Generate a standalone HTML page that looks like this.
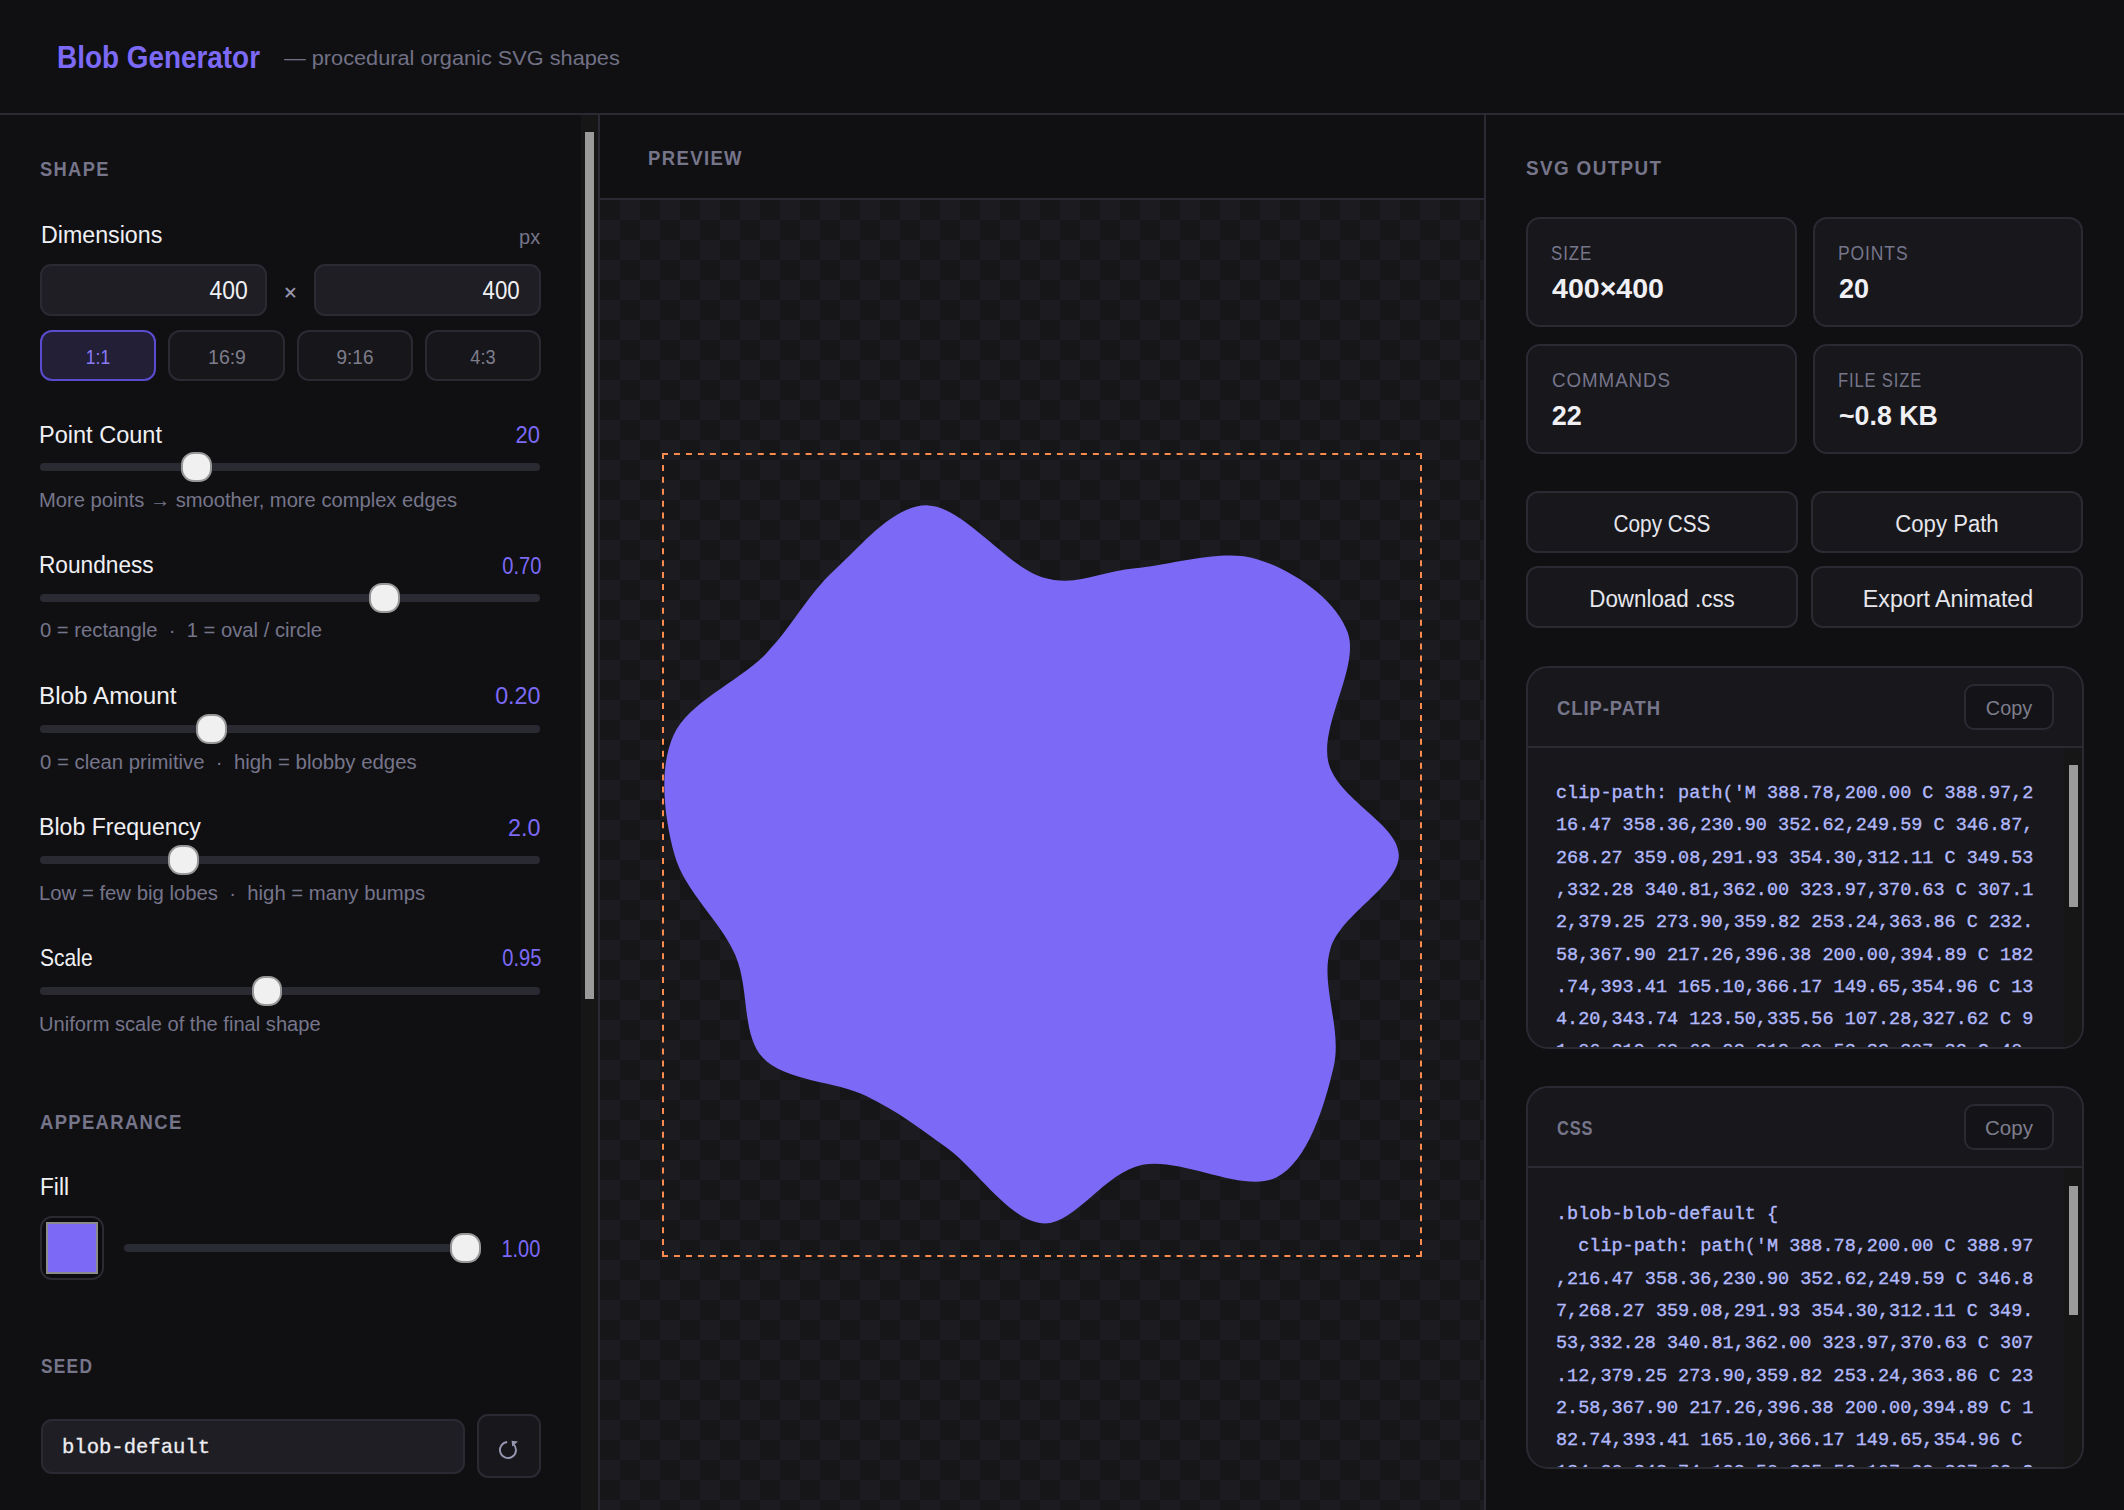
<!DOCTYPE html>
<html><head><meta charset="utf-8"><style>
html,body{margin:0;padding:0;background:#101013;width:2124px;height:1510px;overflow:hidden}
body div,body svg{position:absolute}
.t{white-space:nowrap;line-height:0}
</style></head><body>
<div style="left:0px;top:113px;width:2124px;height:2px;background:#2a2a34"></div>
<div id="title" class="t" style="left:57.40px;transform-origin:0 0;transform:scaleX(0.8997);top:58.06px;font-family:'Liberation Sans', sans-serif;font-size:31px;color:#7c6af7;font-weight:700;letter-spacing:0px;">Blob Generator</div>
<div id="sub" class="t" style="left:284.00px;transform-origin:0 0;transform:scaleX(1.0600);top:58.30px;font-family:'Liberation Sans', sans-serif;font-size:20.5px;color:#727185;font-weight:400;letter-spacing:0px;">— procedural organic SVG shapes</div>
<div style="left:598px;top:115px;width:2px;height:1395px;background:#2a2a34"></div>
<div style="left:581px;top:115px;width:17px;height:1395px;background:#161617"></div>
<div style="left:585px;top:132px;width:9px;height:867px;background:#9a9a9a"></div>
<div id="shape" class="t" style="left:39.80px;transform-origin:0 0;transform:scaleX(0.8884);top:169.06px;font-family:'Liberation Sans', sans-serif;font-size:20.6px;color:#76758a;font-weight:700;letter-spacing:1.5px;">SHAPE</div>
<div id="dim" class="t" style="left:40.70px;transform-origin:0 0;transform:scaleX(0.9600);top:234.61px;font-family:'Liberation Sans', sans-serif;font-size:24.2px;color:#f0f0f4;font-weight:400;letter-spacing:0px;">Dimensions</div>
<div id="px" class="t" style="right:1583.50px;text-align:right;transform-origin:100% 0;transform:scaleX(0.9535);top:236.72px;font-family:'Liberation Sans', sans-serif;font-size:21px;color:#76758a;font-weight:400;letter-spacing:0px;">px</div>
<div style="left:40px;top:264px;width:227px;height:52px;background:#1e1e24;border:2px solid #2a2a33;box-sizing:border-box;border-radius:11px"></div>
<div id="in40" class="t" style="right:1876.50px;text-align:right;transform-origin:100% 0;transform:scaleX(0.9174);top:289.94px;font-family:'Liberation Sans', sans-serif;font-size:25px;color:#f0f0f4;font-weight:400;letter-spacing:0px;">400</div>
<div style="left:314px;top:264px;width:227px;height:52px;background:#1e1e24;border:2px solid #2a2a33;box-sizing:border-box;border-radius:11px"></div>
<div id="in314" class="t" style="right:1604.00px;text-align:right;transform-origin:100% 0;transform:scaleX(0.8911);top:289.94px;font-family:'Liberation Sans', sans-serif;font-size:25px;color:#f0f0f4;font-weight:400;letter-spacing:0px;">400</div>
<div id="times" class="t" style="left:290.50px;transform:translateX(-50%) scaleX(1.0000);top:293.38px;font-family:'Liberation Sans', sans-serif;font-size:22px;color:#9a99b0;font-weight:400;letter-spacing:0px;-webkit-text-stroke:0.3px #9a99b0;">×</div>
<div style="left:40px;top:330px;width:116px;height:51px;background:#221f36;border:2px solid #5a4ccf;box-sizing:border-box;border-radius:12px"></div>
<div id="r0" class="t" style="left:98.20px;transform:translateX(-50%) scaleX(0.8775);top:357.07px;font-family:'Liberation Sans', sans-serif;font-size:20px;color:#8a7bf8;font-weight:400;letter-spacing:0px;">1:1</div>
<div style="left:168px;top:330px;width:117px;height:51px;background:#17171b;border:2px solid #2a2a33;box-sizing:border-box;border-radius:12px"></div>
<div id="r1" class="t" style="left:226.70px;transform:translateX(-50%) scaleX(0.9730);top:357.07px;font-family:'Liberation Sans', sans-serif;font-size:20px;color:#7e7d8c;font-weight:400;letter-spacing:0px;">16:9</div>
<div style="left:297px;top:330px;width:116px;height:51px;background:#17171b;border:2px solid #2a2a33;box-sizing:border-box;border-radius:12px"></div>
<div id="r2" class="t" style="left:354.60px;transform:translateX(-50%) scaleX(0.9474);top:357.07px;font-family:'Liberation Sans', sans-serif;font-size:20px;color:#7e7d8c;font-weight:400;letter-spacing:0px;">9:16</div>
<div style="left:425px;top:330px;width:116px;height:51px;background:#17171b;border:2px solid #2a2a33;box-sizing:border-box;border-radius:12px"></div>
<div id="r3" class="t" style="left:482.60px;transform:translateX(-50%) scaleX(0.9079);top:357.07px;font-family:'Liberation Sans', sans-serif;font-size:20px;color:#7e7d8c;font-weight:400;letter-spacing:0px;">4:3</div>
<div id="lab0" class="t" style="left:39.10px;transform-origin:0 0;transform:scaleX(0.9729);top:434.51px;font-family:'Liberation Sans', sans-serif;font-size:24.2px;color:#f0f0f4;font-weight:400;letter-spacing:0px;">Point Count</div>
<div id="val0" class="t" style="right:1583.90px;text-align:right;transform-origin:100% 0;transform:scaleX(0.9411);top:434.83px;font-family:'Liberation Sans', sans-serif;font-size:23.3px;color:#7c6af7;font-weight:400;letter-spacing:0px;">20</div>
<div style="left:40px;top:463px;width:500px;height:8px;background:#2a2a33;border-radius:4px"></div>
<div style="left:181px;top:452px;width:31px;height:30px;background:#f0f0f0;border:2px solid #989898;box-sizing:border-box;border-radius:13px"></div>
<div id="help0" class="t" style="left:39.00px;transform-origin:0 0;transform:scaleX(1.0241);top:499.97px;font-family:'Liberation Sans', sans-serif;font-size:19.7px;color:#76758a;font-weight:400;letter-spacing:0px;">More points → smoother, more complex edges</div>
<div id="lab1" class="t" style="left:39.10px;transform-origin:0 0;transform:scaleX(0.9372);top:565.31px;font-family:'Liberation Sans', sans-serif;font-size:24.2px;color:#f0f0f4;font-weight:400;letter-spacing:0px;">Roundness</div>
<div id="val1" class="t" style="right:1582.90px;text-align:right;transform-origin:100% 0;transform:scaleX(0.8612);top:565.63px;font-family:'Liberation Sans', sans-serif;font-size:23.3px;color:#7c6af7;font-weight:400;letter-spacing:0px;">0.70</div>
<div style="left:40px;top:594px;width:500px;height:8px;background:#2a2a33;border-radius:4px"></div>
<div style="left:369px;top:583px;width:31px;height:30px;background:#f0f0f0;border:2px solid #989898;box-sizing:border-box;border-radius:13px"></div>
<div id="help1" class="t" style="left:40.00px;transform-origin:0 0;transform:scaleX(1.0270);top:630.47px;font-family:'Liberation Sans', sans-serif;font-size:19.7px;color:#76758a;font-weight:400;letter-spacing:0px;">0 = rectangle  ·  1 = oval / circle</div>
<div id="lab2" class="t" style="left:39.10px;transform-origin:0 0;transform:scaleX(1.0030);top:695.81px;font-family:'Liberation Sans', sans-serif;font-size:24.2px;color:#f0f0f4;font-weight:400;letter-spacing:0px;">Blob Amount</div>
<div id="val2" class="t" style="right:1583.50px;text-align:right;transform-origin:100% 0;transform:scaleX(1.0000);top:696.13px;font-family:'Liberation Sans', sans-serif;font-size:23.3px;color:#7c6af7;font-weight:400;letter-spacing:0px;">0.20</div>
<div style="left:40px;top:725px;width:500px;height:8px;background:#2a2a33;border-radius:4px"></div>
<div style="left:196px;top:714px;width:31px;height:30px;background:#f0f0f0;border:2px solid #989898;box-sizing:border-box;border-radius:13px"></div>
<div id="help2" class="t" style="left:40.00px;transform-origin:0 0;transform:scaleX(1.0335);top:762.17px;font-family:'Liberation Sans', sans-serif;font-size:19.7px;color:#76758a;font-weight:400;letter-spacing:0px;">0 = clean primitive  ·  high = blobby edges</div>
<div id="lab3" class="t" style="left:39.10px;transform-origin:0 0;transform:scaleX(0.9548);top:827.41px;font-family:'Liberation Sans', sans-serif;font-size:24.2px;color:#f0f0f4;font-weight:400;letter-spacing:0px;">Blob Frequency</div>
<div id="val3" class="t" style="right:1583.50px;text-align:right;transform-origin:100% 0;transform:scaleX(1.0000);top:827.73px;font-family:'Liberation Sans', sans-serif;font-size:23.3px;color:#7c6af7;font-weight:400;letter-spacing:0px;">2.0</div>
<div style="left:40px;top:856px;width:500px;height:8px;background:#2a2a33;border-radius:4px"></div>
<div style="left:168px;top:845px;width:31px;height:30px;background:#f0f0f0;border:2px solid #989898;box-sizing:border-box;border-radius:13px"></div>
<div id="help3" class="t" style="left:39.00px;transform-origin:0 0;transform:scaleX(1.0317);top:892.87px;font-family:'Liberation Sans', sans-serif;font-size:19.7px;color:#76758a;font-weight:400;letter-spacing:0px;">Low = few big lobes  ·  high = many bumps</div>
<div id="lab4" class="t" style="left:40.10px;transform-origin:0 0;transform:scaleX(0.8701);top:957.91px;font-family:'Liberation Sans', sans-serif;font-size:24.2px;color:#f0f0f4;font-weight:400;letter-spacing:0px;">Scale</div>
<div id="val4" class="t" style="right:1582.90px;text-align:right;transform-origin:100% 0;transform:scaleX(0.8622);top:958.23px;font-family:'Liberation Sans', sans-serif;font-size:23.3px;color:#7c6af7;font-weight:400;letter-spacing:0px;">0.95</div>
<div style="left:40px;top:987px;width:500px;height:8px;background:#2a2a33;border-radius:4px"></div>
<div style="left:252px;top:976px;width:30px;height:30px;background:#f0f0f0;border:2px solid #989898;box-sizing:border-box;border-radius:13px"></div>
<div id="help4" class="t" style="left:39.00px;transform-origin:0 0;transform:scaleX(1.0212);top:1023.67px;font-family:'Liberation Sans', sans-serif;font-size:19.7px;color:#76758a;font-weight:400;letter-spacing:0px;">Uniform scale of the final shape</div>
<div id="appear" class="t" style="left:40.00px;transform-origin:0 0;transform:scaleX(0.8956);top:1121.66px;font-family:'Liberation Sans', sans-serif;font-size:20.6px;color:#76758a;font-weight:700;letter-spacing:1.5px;">APPEARANCE</div>
<div id="fill" class="t" style="left:39.60px;transform-origin:0 0;transform:scaleX(0.9385);top:1187.11px;font-family:'Liberation Sans', sans-serif;font-size:24.2px;color:#f0f0f4;font-weight:400;letter-spacing:0px;">Fill</div>
<div style="left:40px;top:1216px;width:64px;height:64px;background:#0c0c0f;border:2px solid #2a2a33;box-sizing:border-box;border-radius:12px"></div>
<div style="left:46px;top:1222px;width:52px;height:52px;background:#7c6af7;border:2px solid #8a8a8a;box-sizing:border-box"></div>
<div style="left:124px;top:1244px;width:357px;height:8px;background:#2a2a33;border-radius:4px"></div>
<div style="left:450px;top:1233px;width:31px;height:30px;background:#f0f0f0;border:2px solid #989898;box-sizing:border-box;border-radius:13px"></div>
<div id="fillval" class="t" style="right:1583.50px;text-align:right;transform-origin:100% 0;transform:scaleX(0.8579);top:1249.43px;font-family:'Liberation Sans', sans-serif;font-size:23.3px;color:#7c6af7;font-weight:400;letter-spacing:0px;">1.00</div>
<div id="seed" class="t" style="left:40.60px;transform-origin:0 0;transform:scaleX(0.8400);top:1365.66px;font-family:'Liberation Sans', sans-serif;font-size:20.6px;color:#76758a;font-weight:700;letter-spacing:1.5px;">SEED</div>
<div style="left:41px;top:1419px;width:424px;height:55px;background:#1e1e24;border:2px solid #2a2a33;box-sizing:border-box;border-radius:11px"></div>
<div id="seedtxt" class="t" style="left:62.20px;transform-origin:0 0;transform:scaleX(1.0182);top:1448.22px;font-family:'Liberation Mono', monospace;font-size:20.2px;color:#ededf2;font-weight:400;letter-spacing:0px;-webkit-text-stroke:0.3px #ededf2;">blob-default</div>
<div style="left:477px;top:1414px;width:64px;height:64px;background:#17171c;border:2px solid #2a2a33;box-sizing:border-box;border-radius:11px"></div>
<svg style="left:490px;top:1432px" width="36" height="36" viewBox="490 1432 36 36"><path d="M513.40 1444.10 A8 8 0 1 1 507.16 1442.04" fill="none" stroke="#9897b3" stroke-width="1.9"/><path d="M511.6 1440.8 L518 1441.6 L512.2 1446.6 Z" fill="#9897b3"/></svg>
<div style="left:600px;top:115px;width:884px;height:83px;background:#101013"></div>
<div style="left:600px;top:198px;width:884px;height:2px;background:#2a2a34"></div>
<div style="left:600px;top:200px;width:884px;height:1310px;background:repeating-conic-gradient(#1b1b20 0 25%,#161619 0 50%) 0 0/40px 40px"></div>
<div id="preview" class="t" style="left:647.50px;transform-origin:0 0;transform:scaleX(0.9001);top:157.86px;font-family:'Liberation Sans', sans-serif;font-size:20.6px;color:#76758a;font-weight:700;letter-spacing:1.5px;">PREVIEW</div>
<div style="left:1484px;top:115px;width:2px;height:1395px;background:#2a2a34"></div>
<svg style="left:662px;top:453px" width="760" height="804"><g stroke="#f98b4e" stroke-width="2" fill="none"><path d="M0 1H760M0 803H760" stroke-dasharray="6 5.968"/><path d="M1 0V804M759 0V804" stroke-dasharray="6 5.910"/></g></svg>
<svg style="left:664px;top:455px" width="756" height="800" viewBox="0 0 400 400"><path d="M 388.78,200.00 C 388.97,216.47 358.37,230.91 352.62,249.59 C 346.87,268.27 359.07,291.94 354.30,312.11 C 349.53,332.28 340.81,362.00 323.97,370.63 C 307.13,379.25 273.90,359.82 253.24,363.86 C 232.58,367.90 217.26,396.37 200.00,394.89 C 182.74,393.41 165.10,366.17 149.65,354.96 C 134.20,343.75 123.50,335.56 107.28,327.62 C 91.06,319.68 63.93,319.80 52.33,307.32 C 40.73,294.84 45.44,270.64 37.65,252.75 C 29.87,234.86 11.04,219.35 5.60,200.00 C 0.16,180.65 -2.99,154.36 5.03,136.65 C 13.06,118.94 39.51,108.32 53.73,93.73 C 67.95,79.14 76.02,62.24 90.38,49.12 C 104.74,36.00 121.63,14.37 139.90,15.02 C 158.17,15.67 181.77,47.45 200.00,53.00 C 218.23,58.55 230.33,49.90 249.29,48.31 C 268.24,46.72 294.98,37.77 313.74,43.46 C 332.49,49.14 355.51,64.56 361.80,82.44 C 368.09,100.33 346.98,131.18 351.48,150.77 C 355.98,170.36 388.59,183.53 388.78,200.00 Z" fill="#7c6af6"/></svg>
<div id="svgout" class="t" style="left:1526.40px;transform-origin:0 0;transform:scaleX(0.9163);top:168.16px;font-family:'Liberation Sans', sans-serif;font-size:20.6px;color:#76758a;font-weight:700;letter-spacing:1.5px;">SVG OUTPUT</div>
<div style="left:1526px;top:217px;width:271px;height:110px;background:#17171c;border:2px solid #2a2a33;box-sizing:border-box;border-radius:14px"></div>
<div id="cl0" class="t" style="left:1550.80px;transform-origin:0 0;transform:scaleX(0.8668);top:253.34px;font-family:'Liberation Sans', sans-serif;font-size:19.5px;color:#76758a;font-weight:400;letter-spacing:1px;">SIZE</div>
<div id="cv0" class="t" style="left:1551.80px;transform-origin:0 0;transform:scaleX(1.0572);top:289.24px;font-family:'Liberation Sans', sans-serif;font-size:27px;color:#f0f0f4;font-weight:700;letter-spacing:0px;">400×400</div>
<div style="left:1813px;top:217px;width:270px;height:110px;background:#17171c;border:2px solid #2a2a33;box-sizing:border-box;border-radius:14px"></div>
<div id="cl1" class="t" style="left:1838.20px;transform-origin:0 0;transform:scaleX(0.8974);top:253.34px;font-family:'Liberation Sans', sans-serif;font-size:19.5px;color:#76758a;font-weight:400;letter-spacing:1px;">POINTS</div>
<div id="cv1" class="t" style="left:1839.00px;transform-origin:0 0;transform:scaleX(1.0000);top:289.24px;font-family:'Liberation Sans', sans-serif;font-size:27px;color:#f0f0f4;font-weight:700;letter-spacing:0px;">20</div>
<div style="left:1526px;top:344px;width:271px;height:110px;background:#17171c;border:2px solid #2a2a33;box-sizing:border-box;border-radius:14px"></div>
<div id="cl2" class="t" style="left:1551.80px;transform-origin:0 0;transform:scaleX(0.9607);top:380.04px;font-family:'Liberation Sans', sans-serif;font-size:19.5px;color:#76758a;font-weight:400;letter-spacing:1px;">COMMANDS</div>
<div id="cv2" class="t" style="left:1551.80px;transform-origin:0 0;transform:scaleX(1.0000);top:416.04px;font-family:'Liberation Sans', sans-serif;font-size:27px;color:#f0f0f4;font-weight:700;letter-spacing:0px;">22</div>
<div style="left:1813px;top:344px;width:270px;height:110px;background:#17171c;border:2px solid #2a2a33;box-sizing:border-box;border-radius:14px"></div>
<div id="cl3" class="t" style="left:1838.40px;transform-origin:0 0;transform:scaleX(0.8496);top:380.04px;font-family:'Liberation Sans', sans-serif;font-size:19.5px;color:#76758a;font-weight:400;letter-spacing:1px;">FILE SIZE</div>
<div id="cv3" class="t" style="left:1839.00px;transform-origin:0 0;transform:scaleX(0.9899);top:416.04px;font-family:'Liberation Sans', sans-serif;font-size:27px;color:#f0f0f4;font-weight:700;letter-spacing:0px;">~0.8 KB</div>
<div style="left:1526px;top:491px;width:272px;height:62px;background:#17171c;border:2px solid #2a2a33;box-sizing:border-box;border-radius:12px"></div>
<div id="b0" class="t" style="left:1661.80px;transform:translateX(-50%) scaleX(0.9021);top:524.03px;font-family:'Liberation Sans', sans-serif;font-size:23px;color:#e6e6ec;font-weight:400;letter-spacing:0px;">Copy CSS</div>
<div style="left:1811px;top:491px;width:272px;height:62px;background:#17171c;border:2px solid #2a2a33;box-sizing:border-box;border-radius:12px"></div>
<div id="b1" class="t" style="left:1947.00px;transform:translateX(-50%) scaleX(0.9623);top:524.03px;font-family:'Liberation Sans', sans-serif;font-size:23px;color:#e6e6ec;font-weight:400;letter-spacing:0px;">Copy Path</div>
<div style="left:1526px;top:566px;width:272px;height:62px;background:#17171c;border:2px solid #2a2a33;box-sizing:border-box;border-radius:12px"></div>
<div id="b2" class="t" style="left:1661.80px;transform:translateX(-50%) scaleX(0.9732);top:599.03px;font-family:'Liberation Sans', sans-serif;font-size:23px;color:#e6e6ec;font-weight:400;letter-spacing:0px;">Download .css</div>
<div style="left:1811px;top:566px;width:272px;height:62px;background:#17171c;border:2px solid #2a2a33;box-sizing:border-box;border-radius:12px"></div>
<div id="b3" class="t" style="left:1947.80px;transform:translateX(-50%) scaleX(1.0097);top:599.03px;font-family:'Liberation Sans', sans-serif;font-size:23px;color:#e6e6ec;font-weight:400;letter-spacing:0px;">Export Animated</div>
<div style="left:1526px;top:666px;width:558px;height:383px;background:#17171c;border:2px solid #2a2a33;box-sizing:border-box;border-radius:22px;overflow:hidden"><div style="left:0;top:78px;width:554px;height:2px;background:#2a2a33"></div></div>
<div id="pt0" class="t" style="left:1556.60px;transform-origin:0 0;transform:scaleX(0.9027);top:707.90px;font-family:'Liberation Sans', sans-serif;font-size:20.5px;color:#76758a;font-weight:700;letter-spacing:1px;">CLIP-PATH</div>
<div style="left:1964px;top:684px;width:90px;height:46px;background:#141418;border:2px solid #2a2a33;box-sizing:border-box;border-radius:10px"></div>
<div id="pc0" class="t" style="left:2008.90px;transform:translateX(-50%) scaleX(0.9667);top:707.90px;font-family:'Liberation Sans', sans-serif;font-size:20.5px;color:#7e7d8c;font-weight:400;letter-spacing:0px;">Copy</div>
<div style="left:1528px;top:748px;width:554px;height:299px;overflow:hidden;border-radius:0 0 20px 20px"><div style="left:28px;top:30.03px;width:508px;height:1000px;overflow:hidden;font-family:'Liberation Mono', monospace;font-size:18.5px;line-height:32.3px;color:#b1b8fb;-webkit-text-stroke:0.35px #b1b8fb;white-space:nowrap">clip-path:&nbsp;path(&#x27;M&nbsp;388.78,200.00&nbsp;C&nbsp;388.97,2<br>16.47&nbsp;358.36,230.90&nbsp;352.62,249.59&nbsp;C&nbsp;346.87,<br>268.27&nbsp;359.08,291.93&nbsp;354.30,312.11&nbsp;C&nbsp;349.53<br>,332.28&nbsp;340.81,362.00&nbsp;323.97,370.63&nbsp;C&nbsp;307.1<br>2,379.25&nbsp;273.90,359.82&nbsp;253.24,363.86&nbsp;C&nbsp;232.<br>58,367.90&nbsp;217.26,396.38&nbsp;200.00,394.89&nbsp;C&nbsp;182<br>.74,393.41&nbsp;165.10,366.17&nbsp;149.65,354.96&nbsp;C&nbsp;13<br>4.20,343.74&nbsp;123.50,335.56&nbsp;107.28,327.62&nbsp;C&nbsp;9<br>1.06,319.68&nbsp;63.93,319.80&nbsp;52.33,307.32&nbsp;C&nbsp;40.<br>73,294.84&nbsp;45.44,270.64&nbsp;37.65,252.75&nbsp;C&nbsp;29.87<br>,234.86&nbsp;11.04,219.35&nbsp;5.60,200.00&nbsp;C&nbsp;0.16,180<br>.65&nbsp;-2.99,154.36&nbsp;5.03,136.65&nbsp;C&nbsp;13.06,118.94<br>&nbsp;39.51,108.32&nbsp;53.73,93.73&nbsp;C&nbsp;67.95,79.14&nbsp;76.<br>02,62.24&nbsp;90.38,49.12&nbsp;C&nbsp;104.74,36.00&nbsp;121.63,<br>14.37&nbsp;139.90,15.02&nbsp;C&nbsp;158.17,15.67&nbsp;181.77,47<br>.45&nbsp;200.00,53.00&nbsp;C&nbsp;218.23,58.55&nbsp;230.33,49.9<br>0&nbsp;249.29,48.31&nbsp;C&nbsp;268.24,46.72&nbsp;294.98,37.77&nbsp;<br>313.74,43.46&nbsp;C&nbsp;332.49,49.14&nbsp;355.51,64.56&nbsp;36<br>1.80,82.44&nbsp;C&nbsp;368.09,100.33&nbsp;346.98,131.18&nbsp;35<br>1.48,150.77&nbsp;C&nbsp;355.98,170.36&nbsp;388.59,183.53&nbsp;3<br>88.78,200.00&nbsp;Z&#x27;)<br></div><div style="left:536px;top:0;width:18px;height:1000px;background:#161617"></div></div>
<div style="left:2069px;top:765px;width:9px;height:142px;background:#9a9a9a"></div>
<div style="left:1526px;top:1086px;width:558px;height:383px;background:#17171c;border:2px solid #2a2a33;box-sizing:border-box;border-radius:22px;overflow:hidden"><div style="left:0;top:78px;width:554px;height:2px;background:#2a2a33"></div></div>
<div id="pt1" class="t" style="left:1556.60px;transform-origin:0 0;transform:scaleX(0.8002);top:1127.50px;font-family:'Liberation Sans', sans-serif;font-size:20.5px;color:#76758a;font-weight:700;letter-spacing:1px;">CSS</div>
<div style="left:1964px;top:1104px;width:90px;height:46px;background:#141418;border:2px solid #2a2a33;box-sizing:border-box;border-radius:10px"></div>
<div id="pc1" class="t" style="left:2009.00px;transform:translateX(-50%) scaleX(1.0000);top:1127.50px;font-family:'Liberation Sans', sans-serif;font-size:20.5px;color:#7e7d8c;font-weight:400;letter-spacing:0px;">Copy</div>
<div style="left:1528px;top:1168px;width:554px;height:299px;overflow:hidden;border-radius:0 0 20px 20px"><div style="left:28px;top:31.03px;width:508px;height:1000px;overflow:hidden;font-family:'Liberation Mono', monospace;font-size:18.5px;line-height:32.3px;color:#b1b8fb;-webkit-text-stroke:0.35px #b1b8fb;white-space:nowrap">.blob-blob-default&nbsp;{<br>&nbsp;&nbsp;clip-path:&nbsp;path(&#x27;M&nbsp;388.78,200.00&nbsp;C&nbsp;388.97<br>,216.47&nbsp;358.36,230.90&nbsp;352.62,249.59&nbsp;C&nbsp;346.8<br>7,268.27&nbsp;359.08,291.93&nbsp;354.30,312.11&nbsp;C&nbsp;349.<br>53,332.28&nbsp;340.81,362.00&nbsp;323.97,370.63&nbsp;C&nbsp;307<br>.12,379.25&nbsp;273.90,359.82&nbsp;253.24,363.86&nbsp;C&nbsp;23<br>2.58,367.90&nbsp;217.26,396.38&nbsp;200.00,394.89&nbsp;C&nbsp;1<br>82.74,393.41&nbsp;165.10,366.17&nbsp;149.65,354.96&nbsp;C&nbsp;<br>134.20,343.74&nbsp;123.50,335.56&nbsp;107.28,327.62&nbsp;C<br>&nbsp;91.06,319.68&nbsp;63.93,319.80&nbsp;52.33,307.32&nbsp;C&nbsp;4<br>0.73,294.84&nbsp;45.44,270.64&nbsp;37.65,252.75&nbsp;C&nbsp;29.<br>87,234.86&nbsp;11.04,219.35&nbsp;5.60,200.00&nbsp;C&nbsp;0.16,1<br>80.65&nbsp;-2.99,154.36&nbsp;5.03,136.65&nbsp;C&nbsp;13.06,118.<br>94&nbsp;39.51,108.32&nbsp;53.73,93.73&nbsp;C&nbsp;67.95,79.14&nbsp;7<br>6.02,62.24&nbsp;90.38,49.12&nbsp;C&nbsp;104.74,36.00&nbsp;121.6<br>3,14.37&nbsp;139.90,15.02&nbsp;C&nbsp;158.17,15.67&nbsp;181.77,<br>47.45&nbsp;200.00,53.00&nbsp;C&nbsp;218.23,58.55&nbsp;230.33,49<br>.90&nbsp;249.29,48.31&nbsp;C&nbsp;268.24,46.72&nbsp;294.98,37.7<br>7&nbsp;313.74,43.46&nbsp;C&nbsp;332.49,49.14&nbsp;355.51,64.56&nbsp;<br>361.80,82.44&nbsp;C&nbsp;368.09,100.33&nbsp;346.98,131.18&nbsp;<br>351.48,150.77&nbsp;C&nbsp;355.98,170.36&nbsp;388.59,183.53<br>&nbsp;388.78,200.00&nbsp;Z&#x27;);<br>}<br></div><div style="left:536px;top:0;width:18px;height:1000px;background:#161617"></div></div>
<div style="left:2069px;top:1186px;width:9px;height:129px;background:#9a9a9a"></div>
</body></html>
